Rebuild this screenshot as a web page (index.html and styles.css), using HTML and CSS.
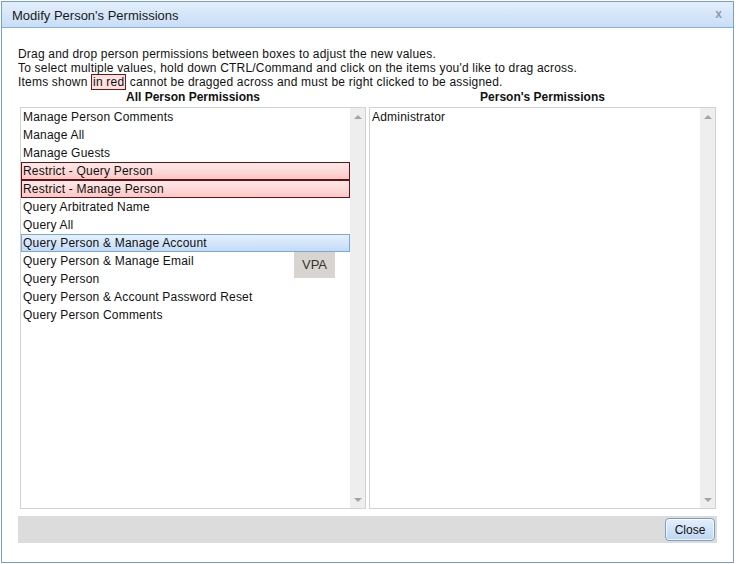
FILE: index.html
```html
<!DOCTYPE html>
<html>
<head>
<meta charset="utf-8">
<link rel="stylesheet" href="styles.css">
</head>
<body>
<div class="dialog">
  <div class="titlebar">
    <span class="title">Modify Person's Permissions</span>
    <span class="close-x">x</span>
  </div>
  <div class="content">
    <div class="intro">
      <div>Drag and drop person permissions between boxes to adjust the new values.</div>
      <div>To select multiple values, hold down CTRL/Command and click on the items you'd like to drag across.</div>
      <div>Items shown <span class="redmark">in red</span> cannot be dragged across and must be right clicked to be assigned.</div>
    </div>
    <div class="columns">
      <div class="col">
        <div class="col-head">All Person Permissions</div>
        <div class="listbox">
          <div class="items">
            <div class="item">Manage Person Comments</div>
            <div class="item">Manage All</div>
            <div class="item">Manage Guests</div>
            <div class="item restricted">Restrict - Query Person</div>
            <div class="item restricted">Restrict - Manage Person</div>
            <div class="item">Query Arbitrated Name</div>
            <div class="item">Query All</div>
            <div class="item selected">Query Person &amp; Manage Account</div>
            <div class="item">Query Person &amp; Manage Email</div>
            <div class="item">Query Person</div>
            <div class="item">Query Person &amp; Account Password Reset</div>
            <div class="item">Query Person Comments</div>
          </div>
          <div class="scrollbar"><span class="arrow up"></span><span class="arrow down"></span></div>
        </div>
      </div>
      <div class="col">
        <div class="col-head">Person's Permissions</div>
        <div class="listbox">
          <div class="items">
            <div class="item">Administrator</div>
          </div>
          <div class="scrollbar"><span class="arrow up"></span><span class="arrow down"></span></div>
        </div>
      </div>
    </div>
    <div class="footer">
      <button class="btn">Close</button>
    </div>
  </div>
  <div class="drag-tip">VPA</div>
</div>
</body>
</html>
```

FILE: styles.css
```css
html, body {
  margin: 0;
  padding: 0;
  background: #ffffff;
}
body {
  font-family: "Liberation Sans", Arial, sans-serif;
  font-size: 12px;
  color: #111;
}
.dialog {
  position: relative;
  box-sizing: border-box;
  margin: 1px 0 0 1px;
  width: 733px;
  height: 562px;
  border: 1px solid #7a9fc7;
  background: #fff;
}
.titlebar {
  box-sizing: border-box;
  height: 26px;
  padding: 3px 11px 0 10px;
  line-height: 22px;
  background: linear-gradient(#e3eefb, #c8def7);
  border-bottom: 1px solid #8cb0d6;
  display: flex;
  justify-content: space-between;
}
.title {
  font-size: 13px;
  color: #1a1a1a;
}
.close-x {
  font-size: 12px;
  font-weight: bold;
  color: #8d9bb0;
  line-height: 19px;
}
.content {
  padding: 19px 16px 0 16px;
}
.intro {
  line-height: 14px;
  color: #111;
  letter-spacing: 0.2px;
}
.redmark {
  border: 1px solid #7a1414;
  background: #fde2e2;
  padding: 0 1px;
}
.columns {
  display: grid;
  grid-template-columns: 346px 347px;
  column-gap: 3px;
  margin: 0 1px 0 2px;
}
.col-head {
  text-align: center;
  font-weight: bold;
  line-height: 16px;
  margin-bottom: 2px;
}
.listbox {
  box-sizing: border-box;
  height: 402px;
  border: 1px solid #d2d2d2;
  display: flex;
  background: #fff;
}
.items {
  flex: 1;
}
.item {
  box-sizing: border-box;
  height: 18px;
  line-height: 18px;
  padding-left: 2px;
  white-space: nowrap;
  letter-spacing: 0.2px;
}
.item.restricted {
  border: 1px solid #6e1010;
  line-height: 16px;
  padding-left: 1px;
  background: linear-gradient(#fdeaea, #fcc8c8);
}
.item.selected {
  border: 1px solid #7fa8d8;
  line-height: 16px;
  padding-left: 1px;
  background: linear-gradient(#e6f1fd, #c2dbf7);
}
.scrollbar {
  width: 15px;
  background: #eeeeee;
  display: flex;
  flex-direction: column;
  justify-content: space-between;
  align-items: center;
  padding: 7px 0 6px;
}
.arrow {
  width: 0;
  height: 0;
  border-left: 4px solid transparent;
  border-right: 4px solid transparent;
}
.arrow.up {
  border-bottom: 4px solid #a4a4a4;
}
.arrow.down {
  border-top: 4px solid #a4a4a4;
}
.footer {
  box-sizing: border-box;
  margin-top: 7px;
  height: 27px;
  background: #dcdcdc;
  display: flex;
  justify-content: flex-end;
  padding: 2px 2px 0 0;
}
.btn {
  box-sizing: border-box;
  width: 50px;
  height: 23px;
  border: 1px solid #7b9ecb;
  border-radius: 4px;
  background: linear-gradient(#e4effc, #bdd6f3);
  box-shadow: inset 0 0 0 1px rgba(255, 255, 255, 0.75);
  font-family: "Liberation Sans", Arial, sans-serif;
  font-size: 12px;
  color: #111;
  padding: 0;
}
.drag-tip {
  position: absolute;
  left: 292px;
  top: 250px;
  width: 41px;
  height: 26px;
  line-height: 26px;
  text-align: center;
  background: #d8d4d0;
  color: #333;
  font-size: 13px;
}
```
